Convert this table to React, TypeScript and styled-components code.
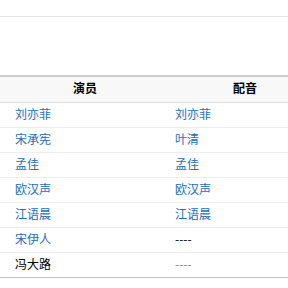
import styled, { createGlobalStyle } from "styled-components";

const GlobalStyle = createGlobalStyle`
  body {
    margin: 0;
    background: #fff;
    overflow: hidden;
    font-family: "Noto Sans CJK SC", "Noto Sans", sans-serif;
  }
`;

const cast = [
  { actor: "刘亦菲", voice: "刘亦菲", actorLink: true, voiceLink: true },
  { actor: "宋承宪", voice: "叶清", actorLink: true, voiceLink: true },
  { actor: "孟佳", voice: "孟佳", actorLink: true, voiceLink: true },
  { actor: "欧汉声", voice: "欧汉声", actorLink: true, voiceLink: true },
  { actor: "江语晨", voice: "江语晨", actorLink: true, voiceLink: true },
  { actor: "宋伊人", voice: "----", actorLink: true, voiceLink: false },
  { actor: "冯大路", voice: "----", actorLink: false, voiceLink: false, muted: true },
];

const App = () => {
  return (
    <Page>
      <GlobalStyle />
      <TopBar />
      <Table>
        <thead>
          <tr>
            <HeadCell $width={170}>演员</HeadCell>
            <HeadCell $width={150}>配音</HeadCell>
          </tr>
        </thead>
        <tbody>
          {cast.map((row, i) => (
            <Row key={i} $last={i === cast.length - 1}>
              <FirstCell>
                {row.actorLink ? <Link>{row.actor}</Link> : <Plain>{row.actor}</Plain>}
              </FirstCell>
              <SecondCell>
                {row.voiceLink ? (
                  <Link>{row.voice}</Link>
                ) : (
                  <Plain $muted={row.muted}>{row.voice}</Plain>
                )}
              </SecondCell>
            </Row>
          ))}
        </tbody>
      </Table>
    </Page>
  );
};

export default App;

const Page = styled.div`
  width: 288px;
  height: 288px;
  overflow: hidden;
`;

const TopBar = styled.div`
  height: 16px;
  border-bottom: 1px solid #e5e5e5;
  margin-bottom: 58px;
`;

const Table = styled.table`
  width: 320px;
  border-collapse: collapse;
  table-layout: fixed;
  font-size: 12px;
  border-top: 2px solid #cccccc;
  border-bottom: 1px solid #bfc6cd;
`;

const HeadCell = styled.th<{ $width: number }>`
  width: ${(p) => p.$width}px;
  height: 22px;
  padding: 0 0 3px;
  background: #f8f8f8;
  border-bottom: 1px solid #dddddd;
  font-weight: 700;
  color: #000;
  text-align: center;
  line-height: 20px;
`;

const Row = styled.tr<{ $last: boolean }>`
  height: 25px;
  border-bottom: ${(p) => (p.$last ? "none" : "1px solid #eeeeee")};
`;

const FirstCell = styled.td`
  padding: 0 0 3px 15px;
  line-height: 20px;
`;

const SecondCell = styled.td`
  padding: 0 0 3px 5px;
  line-height: 20px;
`;

const Link = styled.a`
  color: #1a6ec4;
  text-decoration: none;
  cursor: pointer;
`;

const Plain = styled.span<{ $muted?: boolean }>`
  color: ${(p) => (p.$muted ? "#888888" : "#000000")};
`;
